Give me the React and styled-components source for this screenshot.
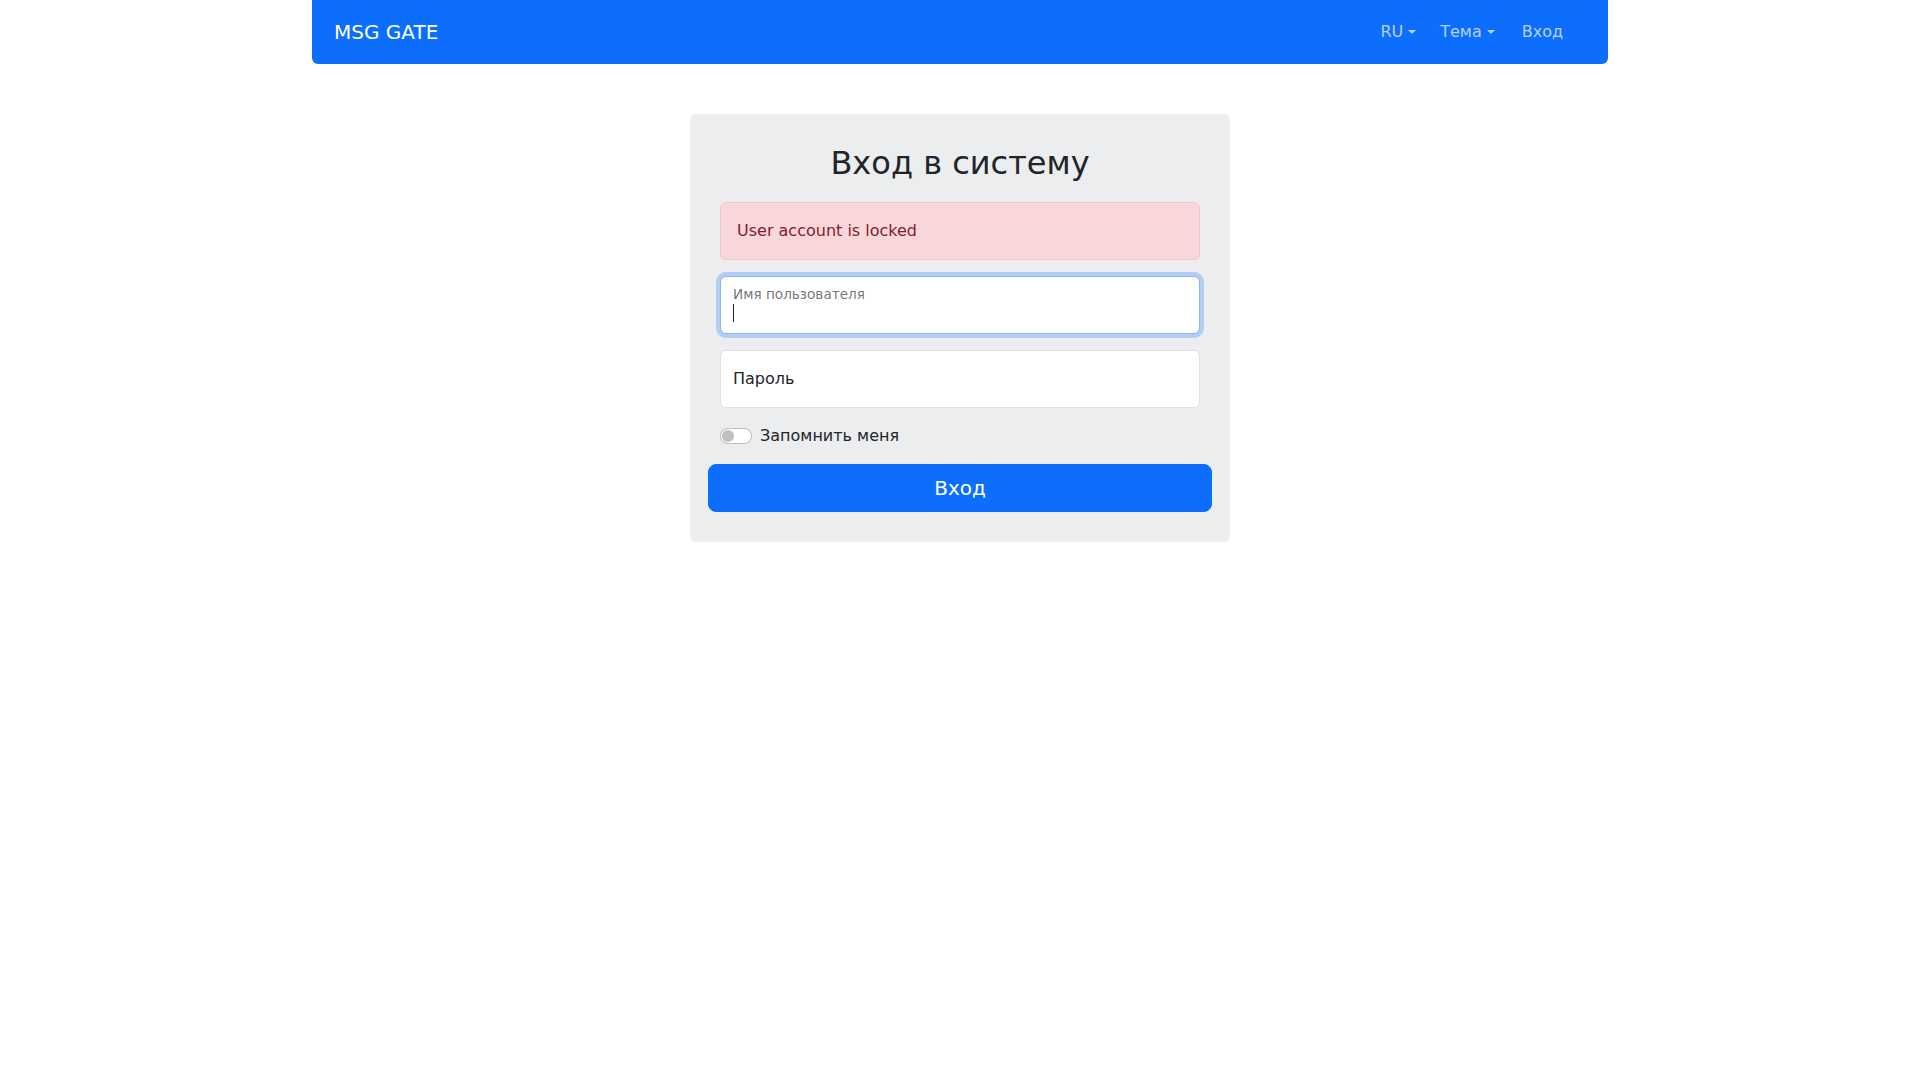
import styled, { createGlobalStyle } from 'styled-components';

const GlobalStyle = createGlobalStyle`
  * {
    box-sizing: border-box;
  }
  body {
    margin: 0;
    background: #fff;
    color: #212529;
    font-family: 'DejaVu Sans', 'Noto Sans', sans-serif;
    font-size: 16px;
    line-height: 1.5;
  }
`;

const Container = styled.div`
  max-width: 1320px;
  margin: 0 auto;
  padding: 0 12px;
`;

const Navbar = styled.nav`
  display: flex;
  align-items: center;
  justify-content: space-between;
  height: 64px;
  padding: 0 33px 0 22px;
  background: #0d6efd;
  border-radius: 0 0 6px 6px;
`;

const Brand = styled.a`
  color: #fff;
  font-size: 20px;
  line-height: 30px;
  text-decoration: none;
`;

const NavList = styled.ul`
  display: flex;
  align-items: center;
  list-style: none;
  margin: 0;
  padding: 0;
`;

const NavItem = styled.li`
  margin-left: ${props => (props.$spaced ? '3px' : '0')};
`;

const NavLink = styled.a`
  display: flex;
  align-items: center;
  padding: 8px 12px;
  color: rgba(255, 255, 255, 0.7);
  text-decoration: none;
  line-height: 24px;

  ${props =>
    props.$dropdown &&
    `
    &::after {
      content: '';
      margin-left: 5px;
      border-top: 4.8px solid;
      border-left: 4.8px solid transparent;
      border-right: 4.8px solid transparent;
    }
  `}
`;

const Card = styled.div`
  width: 540px;
  margin: 50px auto 0;
  padding: 30px 18px;
  background: #ecedef;
  border-radius: 6px;
`;

const Title = styled.h2`
  margin: 0 0 20px;
  font-size: 32px;
  font-weight: 500;
  line-height: 1.2;
  text-align: center;
  color: #212529;
`;

const Fields = styled.div`
  padding: 0 12px;
`;

const Alert = styled.div`
  margin-bottom: 16px;
  padding: 16px;
  background: #f8d7da;
  border: 1px solid #f5c2c7;
  border-radius: 6px;
  color: #842029;
`;

const Field = styled.div`
  position: relative;
  margin-bottom: 16px;
`;

const Input = styled.input`
  display: block;
  width: 100%;
  height: 58px;
  padding: ${props => (props.$focused ? '26px 12px 10px' : '16px 12px')};
  font: inherit;
  color: #212529;
  background: #fff;
  border: 1px solid ${props => (props.$focused ? '#86b7fe' : '#dee2e6')};
  border-radius: 6px;
  outline: none;
  box-shadow: ${props =>
    props.$focused ? '0 0 0 4px rgba(13, 110, 253, 0.25)' : 'none'};
`;

const FloatLabel = styled.label`
  position: absolute;
  left: 13px;
  top: ${props => (props.$floated ? '7.6px' : '17px')};
  font-size: ${props => (props.$floated ? '13.6px' : '16px')};
  line-height: ${props => (props.$floated ? '20.4px' : '24px')};
  color: ${props => (props.$floated ? 'rgba(33, 37, 41, 0.65)' : '#212529')};
  pointer-events: none;
`;

const Caret = styled.span`
  position: absolute;
  left: 13px;
  top: 28px;
  width: 1px;
  height: 18px;
  background: #212529;
`;

const SwitchRow = styled.label`
  display: flex;
  align-items: center;
  gap: 8px;
  min-height: 24px;
  margin-bottom: 16px;
`;

const Switch = styled.span`
  position: relative;
  width: 32px;
  height: 16px;
  border: 1px solid rgba(0, 0, 0, 0.25);
  border-radius: 16px;
  background: #fff;

  &::before {
    content: '';
    position: absolute;
    left: 1px;
    top: 1px;
    width: 12px;
    height: 12px;
    border-radius: 50%;
    background: #bfbfbf;
  }
`;

const SubmitButton = styled.button`
  display: block;
  width: 100%;
  padding: 8px 16px;
  font: inherit;
  font-size: 20px;
  line-height: 30px;
  color: #fff;
  background: #0d6efd;
  border: 1px solid #0d6efd;
  border-radius: 8px;
  cursor: pointer;
`;

const App = () => {
  return (
    <>
      <GlobalStyle />
      <Container>
        <Navbar>
          <Brand href="#">MSG GATE</Brand>
          <NavList>
            <NavItem>
              <NavLink $dropdown href="#">RU</NavLink>
            </NavItem>
            <NavItem>
              <NavLink $dropdown href="#">Тема</NavLink>
            </NavItem>
            <NavItem $spaced>
              <NavLink href="#">Вход</NavLink>
            </NavItem>
          </NavList>
        </Navbar>
      </Container>

      <Card>
        <Title>Вход в систему</Title>
        <Fields>
          <Alert>User account is locked</Alert>
          <Field>
            <Input $focused type="text" />
            <FloatLabel $floated>Имя пользователя</FloatLabel>
            <Caret />
          </Field>
          <Field>
            <Input type="password" />
            <FloatLabel>Пароль</FloatLabel>
          </Field>
          <SwitchRow>
            <Switch />
            Запомнить меня
          </SwitchRow>
        </Fields>
        <SubmitButton type="submit">Вход</SubmitButton>
      </Card>
    </>
  );
};

export default App;
